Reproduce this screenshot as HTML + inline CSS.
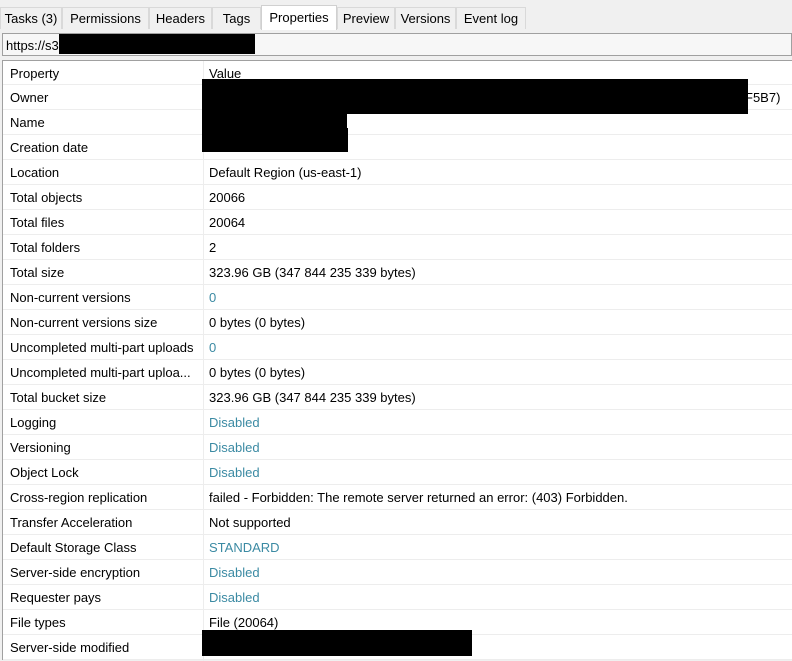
<!DOCTYPE html>
<html><head><style>
*{margin:0;padding:0;box-sizing:border-box}
body{width:792px;height:660px;background:#f0f0f0;font-family:"Liberation Sans",sans-serif;font-size:13px;color:#000;position:relative;overflow:hidden}
.tab{position:absolute;top:7px;height:22px;border:1px solid #d9d9d9;border-bottom:none;background:#f0f0f0;padding-top:3px;text-align:center;font-size:13px}
.tab.act{top:5px;height:25px;background:#fff;padding-top:4px;border-color:#d0d0d0}
.url{position:absolute;left:2px;top:33px;width:790px;height:23px;border:1px solid #a0a0a0;background:#f7f7f7;padding:4px 0 0 3px}
.tbl{position:absolute;left:2px;top:60px;width:790px;height:600px;border:1px solid #a0a0a0;border-right:none;border-bottom:none;background:#fff}
.row{position:absolute;left:0;width:790px;height:25px;border-bottom:1px solid #ededed}
.row span{position:absolute;top:5px}
.k{left:7px}.v{left:206px}
.col{position:absolute;left:200px;top:0;width:1px;height:600px;background:#ededed}
.b{color:#3b8aa3}
.blk{position:absolute;background:#000}
</style></head><body>
<div class="tab" style="left:0;width:62px">Tasks (3)</div>
<div class="tab" style="left:62px;width:87px">Permissions</div>
<div class="tab" style="left:149px;width:63px">Headers</div>
<div class="tab" style="left:212px;width:49px">Tags</div>
<div class="tab act" style="left:261px;width:76px">Properties</div>
<div class="tab" style="left:337px;width:58px">Preview</div>
<div class="tab" style="left:395px;width:61px">Versions</div>
<div class="tab" style="left:456px;width:70px">Event log</div>
<div class="url">https://s3</div>
<div class="blk" style="left:59px;top:34px;width:196px;height:20px"></div>
<div class="tbl">
<div class="col"></div>
<div class="row" style="top:0;height:24px"><span class="k" style="top:5px">Property</span><span class="v" style="top:5px">Value</span></div>
<div class="row" style="top:24px"><span class="k">Owner</span><span class="v" style="left:742px">F5B7)</span></div>
<div class="row" style="top:49px"><span class="k">Name</span></div>
<div class="row" style="top:74px"><span class="k">Creation date</span></div>
<div class="row" style="top:99px"><span class="k">Location</span><span class="v">Default Region (us-east-1)</span></div>
<div class="row" style="top:124px"><span class="k">Total objects</span><span class="v">20066</span></div>
<div class="row" style="top:149px"><span class="k">Total files</span><span class="v">20064</span></div>
<div class="row" style="top:174px"><span class="k">Total folders</span><span class="v">2</span></div>
<div class="row" style="top:199px"><span class="k">Total size</span><span class="v">323.96 GB (347 844 235 339 bytes)</span></div>
<div class="row" style="top:224px"><span class="k">Non-current versions</span><span class="v b">0</span></div>
<div class="row" style="top:249px"><span class="k">Non-current versions size</span><span class="v">0 bytes (0 bytes)</span></div>
<div class="row" style="top:274px"><span class="k">Uncompleted multi-part uploads</span><span class="v b">0</span></div>
<div class="row" style="top:299px"><span class="k">Uncompleted multi-part uploa...</span><span class="v">0 bytes (0 bytes)</span></div>
<div class="row" style="top:324px"><span class="k">Total bucket size</span><span class="v">323.96 GB (347 844 235 339 bytes)</span></div>
<div class="row" style="top:349px"><span class="k">Logging</span><span class="v b">Disabled</span></div>
<div class="row" style="top:374px"><span class="k">Versioning</span><span class="v b">Disabled</span></div>
<div class="row" style="top:399px"><span class="k">Object Lock</span><span class="v b">Disabled</span></div>
<div class="row" style="top:424px"><span class="k">Cross-region replication</span><span class="v">failed - Forbidden: The remote server returned an error: (403) Forbidden.</span></div>
<div class="row" style="top:449px"><span class="k">Transfer Acceleration</span><span class="v">Not supported</span></div>
<div class="row" style="top:474px"><span class="k">Default Storage Class</span><span class="v b">STANDARD</span></div>
<div class="row" style="top:499px"><span class="k">Server-side encryption</span><span class="v b">Disabled</span></div>
<div class="row" style="top:524px"><span class="k">Requester pays</span><span class="v b">Disabled</span></div>
<div class="row" style="top:549px"><span class="k">File types</span><span class="v">File (20064)</span></div>
<div class="row" style="top:574px"><span class="k">Server-side modified</span></div>
</div>
<div class="blk" style="left:202px;top:79px;width:546px;height:35px"></div>
<div class="blk" style="left:202px;top:112px;width:145px;height:20px"></div>
<div class="blk" style="left:202px;top:128px;width:146px;height:24px"></div>
<div class="blk" style="left:202px;top:630px;width:270px;height:26px"></div>
</body></html>
